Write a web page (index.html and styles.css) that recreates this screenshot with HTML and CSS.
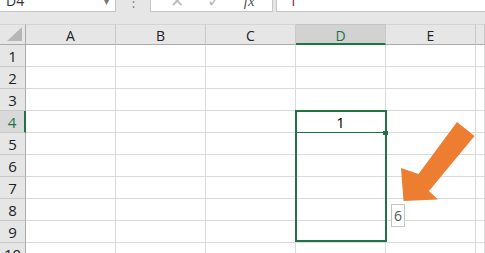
FILE: index.html
```html
<!DOCTYPE html>
<html lang="en">
  <head>
    <meta charset="UTF-8" />
    <title>Sheet</title>
    <link rel="stylesheet" href="styles.css">
  </head>
  <body>
    <div class="app">
      <div class="formula-bar">
        <div class="name-box">D4<span class="caret">&#9662;</span></div>
        <div class="dots">&#8942;</div>
        <div class="fx-box">
          <span class="fx-icon">&#10005;</span>
          <span class="fx-icon">&#10003;</span>
          <span class="fx-icon fx">fx</span>
        </div>
        <div class="content-box">1</div>
      </div>

      <div class="sheet">
        <div class="hd corner"><span class="tri"></span></div>
        <div class="hd col">A</div>
        <div class="hd col">B</div>
        <div class="hd col">C</div>
        <div class="hd col active">D</div>
        <div class="hd col">E</div>
        <div class="hd col"></div>

        <div class="hd row">1</div><div class="c"></div><div class="c"></div><div class="c"></div><div class="c"></div><div class="c"></div><div class="c"></div>
        <div class="hd row">2</div><div class="c"></div><div class="c"></div><div class="c"></div><div class="c"></div><div class="c"></div><div class="c"></div>
        <div class="hd row">3</div><div class="c"></div><div class="c"></div><div class="c"></div><div class="c"></div><div class="c"></div><div class="c"></div>
        <div class="hd row active">4</div><div class="c"></div><div class="c"></div><div class="c"></div><div class="c value">1</div><div class="c"></div><div class="c"></div>
        <div class="hd row">5</div><div class="c"></div><div class="c"></div><div class="c"></div><div class="c"></div><div class="c"></div><div class="c"></div>
        <div class="hd row">6</div><div class="c"></div><div class="c"></div><div class="c"></div><div class="c"></div><div class="c"></div><div class="c"></div>
        <div class="hd row">7</div><div class="c"></div><div class="c"></div><div class="c"></div><div class="c"></div><div class="c"></div><div class="c"></div>
        <div class="hd row">8</div><div class="c"></div><div class="c"></div><div class="c"></div><div class="c"></div><div class="c"></div><div class="c"></div>
        <div class="hd row">9</div><div class="c"></div><div class="c"></div><div class="c"></div><div class="c"></div><div class="c"></div><div class="c"></div>
        <div class="hd row">10</div><div class="c"></div><div class="c"></div><div class="c"></div><div class="c"></div><div class="c"></div><div class="c"></div>
      </div>

      <!-- selection drawn over the grid -->
      <div class="selection"></div>
      <div class="active-line"></div>
      <div class="handle"></div>

      <div class="fill-tip">6</div>

      <svg class="arrow" width="85" height="90" viewBox="0 0 85 90">
        <polygon fill="#ed7d31" points="62,7 79.5,21 34,76 43,84.5 8.5,86 6,53 23.5,59" />
      </svg>
    </div>
  </body>
</html>
```

FILE: styles.css
```css
body {
  margin: 0;
  background: #fff;
  font-family: "Open Sans", "Liberation Sans", Arial, sans-serif;
  overflow: hidden;
}
.app {
  position: relative;
  width: 485px;
  height: 253px;
  background: #e6e6e6;
  overflow: hidden;
}
.formula-bar {
  display: flex;
  height: 22px;
  margin-top: -10px;
  margin-bottom: 12px;
  font-size: 14px;
  line-height: 22px;
  color: #333;
}
.name-box {
  background: #fff;
  border-right: 1px solid #c6c6c6;
  border-bottom: 1px solid #c6c6c6;
  padding-left: 6px;
  box-sizing: border-box;
  width: 116px;
  display: flex;
  justify-content: space-between;
}
.caret {
  font-size: 10px;
  color: #777;
  padding-right: 6px;
}
.dots {
  width: 34px;
  text-align: center;
  color: #888;
  font-size: 13px;
}
.fx-box {
  width: 123px;
  background: #fff;
  border: 1px solid #c6c6c6;
  border-top: none;
  display: flex;
  align-items: center;
  justify-content: space-around;
  padding: 0 6px 0 8px;
  box-sizing: border-box;
  color: #bbb;
  font-size: 17px;
}
.fx-icon.fx {
  font-family: "Liberation Serif", serif;
  font-style: italic;
  color: #555;
  font-size: 15px;
}
.content-box {
  flex: 1;
  margin-left: 3px;
  background: #fff;
  border-left: 1px solid #c6c6c6;
  border-bottom: 1px solid #c6c6c6;
  padding-left: 12px;
  color: #6b2b2b;
}
.sheet {
  display: grid;
  grid-template-columns: 26px repeat(5, 90px) 1fr;
  grid-template-rows: 21px;
  grid-auto-rows: 22px;
  background: #fff;
  font-size: 14px;
}
.hd {
  background: #e6e6e6;
  color: #222;
  display: flex;
  align-items: center;
  justify-content: center;
  box-sizing: border-box;
}
.hd.col {
  border-right: 1px solid #c9c9c9;
  border-bottom: 1px solid #ababab;
  border-top: 1px solid #d4d4d4;
  padding-top: 2px;
}
.hd.col.active {
  background: #d2d2d2;
  color: #217346;
  border-bottom: 2px solid #217346;
  border-top-color: #c4c4c4;
}
.hd.corner {
  border-right: 1px solid #ababab;
  border-bottom: 1px solid #ababab;
  border-top: 1px solid #d4d4d4;
  justify-content: flex-end;
  align-items: flex-end;
  padding: 0 3px 3px 0;
}
.tri {
  width: 0;
  height: 0;
  border-left: 15px solid transparent;
  border-bottom: 14px solid #b6b6b6;
}
.hd.row {
  border-right: 1px solid #ababab;
  border-bottom: 1px solid #c9c9c9;
  font-size: 15px;
  padding-top: 1px;
}
.hd.row.active {
  color: #217346;
  background: #d9d9d9;
  border-right: 2px solid #217346;
}
.c {
  border-right: 1px solid #dadada;
  border-bottom: 1px solid #dadada;
  box-sizing: border-box;
}
.value {
  text-align: center;
  font-size: 15px;
  line-height: 22px;
  color: #000;
}
.selection {
  position: absolute;
  left: 295px;
  top: 110px;
  width: 92px;
  height: 132px;
  border: 2px solid #217346;
  box-sizing: border-box;
}
.active-line {
  position: absolute;
  left: 297px;
  top: 132px;
  width: 87px;
  height: 1px;
  background: #217346;
}
.handle {
  position: absolute;
  left: 383px;
  top: 131px;
  width: 5px;
  height: 4px;
  background: #217346;
}
.fill-tip {
  position: absolute;
  left: 391px;
  top: 204px;
  width: 14px;
  height: 23px;
  box-sizing: border-box;
  background: #fff;
  border: 1px solid #c4c4c4;
  color: #555;
  font-size: 14px;
  line-height: 21px;
  text-align: center;
}
.arrow {
  position: absolute;
  left: 395px;
  top: 115px;
}
```
